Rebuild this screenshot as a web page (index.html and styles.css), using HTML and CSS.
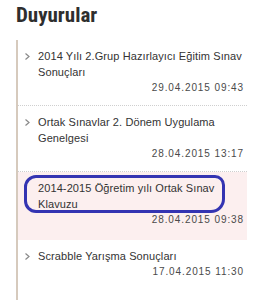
FILE: index.html
```html
<!DOCTYPE html>
<html lang="tr">
<head>
    <meta charset="UTF-8">
    <meta name="viewport" content="width=device-width, initial-scale=1.0">
    <title>Duyurular</title>
    <link rel="stylesheet" href="styles.css">
</head>
<body>

<div class="panel">
    <h1 class="title">Duyurular</h1>
    <ul class="news">
        <li class="item">
            <svg class="chev" width="5" height="7" viewBox="0 0 5 7"><polyline points="0.5,0.5 4,3.5 0.5,6.5" fill="none" stroke="#8a8a8a" stroke-width="1.2"/></svg>
            <div class="text">2014 Yılı 2.Grup Hazırlayıcı Eğitim Sınav<br>Sonuçları</div>
            <div class="date">29.04.2015 09:43</div>
        </li>
        <li class="item">
            <svg class="chev" width="5" height="7" viewBox="0 0 5 7"><polyline points="0.5,0.5 4,3.5 0.5,6.5" fill="none" stroke="#8a8a8a" stroke-width="1.2"/></svg>
            <div class="text">Ortak Sınavlar 2. Dönem Uygulama<br>Genelgesi</div>
            <div class="date">28.04.2015 13:17</div>
        </li>
        <li class="item active">
            <div class="text">2014-2015 Öğretim yılı Ortak Sınav<br>Klavuzu</div>
            <div class="date">28.04.2015 09:38</div>
            <span class="mark"></span>
        </li>
        <li class="item last">
            <svg class="chev" width="5" height="7" viewBox="0 0 5 7"><polyline points="0.5,0.5 4,3.5 0.5,6.5" fill="none" stroke="#8a8a8a" stroke-width="1.2"/></svg>
            <div class="text">Scrabble Yarışma Sonuçları</div>
            <div class="date">17.04.2015 11:30</div>
        </li>
    </ul>
</div>

</body>
</html>
```

FILE: styles.css
```css
body {
    margin: 0;
    background: #fff;
    font-family: 'Liberation Sans', Arial, sans-serif;
    color: #333;
}
.panel {
    padding: 0 0 0 16px;
}
.title {
    font-family: 'Liberation Sans Narrow', 'Roboto', sans-serif;
    font-stretch: condensed;
    font-size: 21px;
    font-weight: bold;
    color: #2e2e2e;
    margin: 0;
    padding-top: 3px;
    height: 37px;
    line-height: 24px;
}
.news {
    list-style: none;
    margin: 0;
    padding: 0;
    width: 229px;
    border-left: 2px solid #d6cabd;
    min-height: 260px;
}
.item {
    position: relative;
    padding: 8px 0 11px 20px;
    border-bottom: 1px dotted #cfcfcf;
}
.item.last {
    border-bottom: none;
    padding-top: 8px;
}
.item.active {
    background: #fcefef;
    border-bottom: none;
    padding-bottom: 14px;
}
.chev {
    position: absolute;
    left: 7px;
    top: 13px;
}
.text {
    font-size: 11px;
    line-height: 16px;
    letter-spacing: 0.1px;
    white-space: nowrap;
    color: #333;
}
.date {
    font-size: 10px;
    line-height: 12px;
    margin-top: 2px;
    margin-right: 3px;
    text-align: right;
    color: #4a4a4a;
    letter-spacing: 0.9px;
}
.mark {
    position: absolute;
    left: 6px;
    top: 3px;
    width: 195px;
    height: 32px;
    border: 3px solid #3434b2;
    border-radius: 12px 10px 14px 12px;
}
```
